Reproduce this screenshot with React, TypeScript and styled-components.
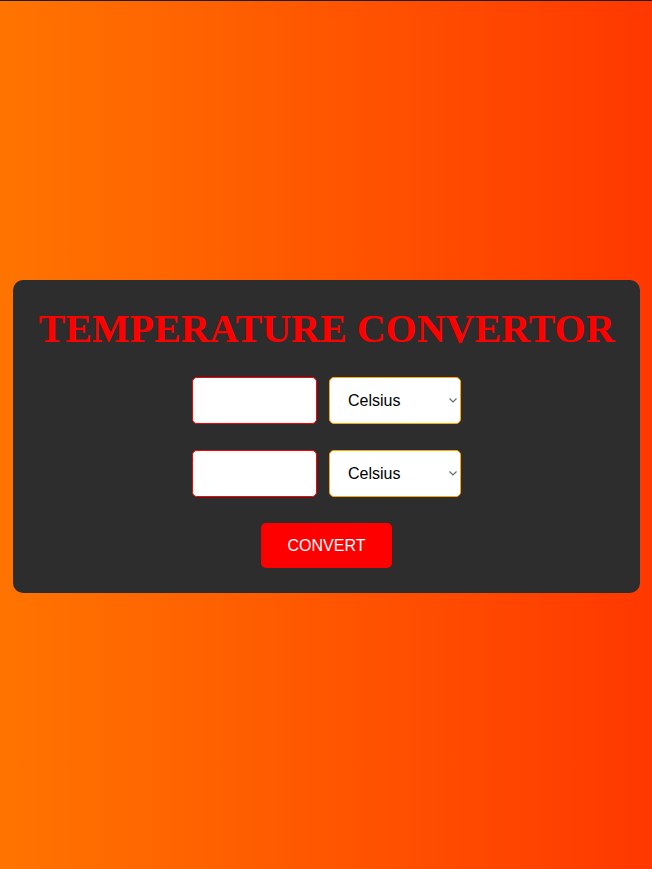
import { useState } from 'react';
import styled, { createGlobalStyle } from 'styled-components';

const GlobalStyle = createGlobalStyle`
  html, body {
    margin: 0;
    padding: 0;
  }
  body {
    min-height: 100vh;
    box-sizing: border-box;
    border-top: 1px solid #1e1e1e;
    background: linear-gradient(to right, #ff7400, #ff3800);
    font-family: "Liberation Sans", Arial, sans-serif;
  }
`;

const units = [
  { value: 'celsius', label: 'Celsius' },
  { value: 'fahrenheit', label: 'Fahrenheit' },
  { value: 'kelvin', label: 'Kelvin' },
];

function UnitPicker({ value, onChange }: { value: string; onChange: (v: string) => void }) {
  return (
    <SelectWrap>
      <UnitSelect value={value} onChange={(e) => onChange(e.target.value)}>
        {units.map((u) => (
          <option key={u.value} value={u.value}>
            {u.label}
          </option>
        ))}
      </UnitSelect>
      <Chevron width="8" height="5" viewBox="0 0 8 5">
        <path d="M0.5 0.5 L4 4 L7.5 0.5" fill="none" stroke="#6b6b6b" strokeWidth="1.2" />
      </Chevron>
    </SelectWrap>
  );
}

export default function App() {
  const [fromValue, setFromValue] = useState('');
  const [toValue, setToValue] = useState('');
  const [fromUnit, setFromUnit] = useState('celsius');
  const [toUnit, setToUnit] = useState('celsius');

  const toCelsius = (v: number, unit: string) =>
    unit === 'fahrenheit' ? ((v - 32) * 5) / 9 : unit === 'kelvin' ? v - 273.15 : v;
  const fromCelsius = (v: number, unit: string) =>
    unit === 'fahrenheit' ? (v * 9) / 5 + 32 : unit === 'kelvin' ? v + 273.15 : v;

  const handleConvert = () => {
    const n = parseFloat(fromValue);
    if (isNaN(n)) return;
    const result = fromCelsius(toCelsius(n, fromUnit), toUnit);
    setToValue(String(Math.round(result * 100) / 100));
  };

  return (
    <>
      <GlobalStyle />
      <Page>
        <Card>
          <Title>TEMPERATURE CONVERTOR</Title>
          <Row>
            <ValueInput value={fromValue} onChange={(e) => setFromValue(e.target.value)} />
            <UnitPicker value={fromUnit} onChange={setFromUnit} />
          </Row>
          <Row>
            <ValueInput value={toValue} onChange={(e) => setToValue(e.target.value)} />
            <UnitPicker value={toUnit} onChange={setToUnit} />
          </Row>
          <ConvertButton onClick={handleConvert}>CONVERT</ConvertButton>
        </Card>
      </Page>
    </>
  );
}

const Page = styled.div`
  min-height: 868px;
  box-sizing: border-box;
  padding-top: 3px;
  display: flex;
  align-items: center;
  justify-content: center;
`;

const Card = styled.div`
  width: 627px;
  box-sizing: border-box;
  margin-left: 1px;
  background-color: #2d2d2d;
  border-radius: 10px;
  padding: 27px 0 25px;
  display: flex;
  flex-direction: column;
  align-items: center;
`;

const Title = styled.h1`
  margin: 0 0 26px;
  font-family: "Liberation Serif", "Times New Roman", serif;
  font-weight: bold;
  font-size: 40px;
  line-height: 44px;
  color: #ff0000;
`;

const Row = styled.div`
  display: flex;
  gap: 12px;
  margin-bottom: 26px;
`;

const ValueInput = styled.input`
  width: 125px;
  height: 47px;
  box-sizing: border-box;
  border: 1px solid #ff0000;
  border-radius: 5px;
  background: #fff;
  padding: 0 10px;
  font-family: "Liberation Sans", Arial, sans-serif;
  font-size: 16px;
  outline: none;
`;

const SelectWrap = styled.div`
  position: relative;
  width: 132px;
  height: 47px;
`;

const UnitSelect = styled.select`
  appearance: none;
  width: 100%;
  height: 100%;
  box-sizing: border-box;
  border: 1px solid #ffa500;
  border-radius: 5px;
  background: #fff;
  padding: 0 14px 0 18px;
  font-family: "Liberation Sans", Arial, sans-serif;
  font-size: 16px;
  color: #000;
  outline: none;
`;

const Chevron = styled.svg`
  position: absolute;
  right: 4px;
  top: 21px;
  pointer-events: none;
`;

const ConvertButton = styled.button`
  width: 131px;
  height: 45px;
  border: none;
  border-radius: 5px;
  background-color: #ff0000;
  color: #fff;
  font-family: "Liberation Sans", Arial, sans-serif;
  font-size: 16px;
  cursor: pointer;
`;
